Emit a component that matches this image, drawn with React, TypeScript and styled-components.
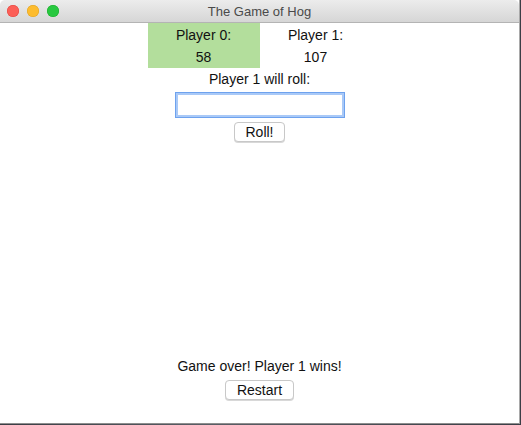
import * as React from "react";
import styled, { createGlobalStyle } from "styled-components";

const Global = createGlobalStyle`
  html, body {
    margin: 0;
    padding: 0;
    background: #6d6f73;
    font-family: "Liberation Sans", Arial, sans-serif;
  }
`;

const Desk = styled.div`
  width: 521px;
  height: 425px;
  background: linear-gradient(90deg, #3a3d44, #5a5e66 40%, #3b3e46);
  overflow: hidden;
`;

const Window = styled.div`
  width: 520px;
  height: 424px;
  background: #fff;
  border-right: 1px solid #a9a9a9;
  border-bottom: 1px solid #8e8e8e;
  display: flex;
  flex-direction: column;
  box-sizing: border-box;
`;

const TitleBar = styled.div`
  height: 23px;
  flex: 0 0 23px;
  background: linear-gradient(#ececec, #d6d6d6);
  border-bottom: 1px solid #b4b4b4;
  border-radius: 5px 5px 0 0;
  display: flex;
  align-items: center;
  position: relative;
  box-sizing: border-box;
`;

const Lights = styled.div`
  display: flex;
  gap: 8px;
  padding-left: 7px;
`;

const Light = styled.span<{ $c: string; $b: string }>`
  width: 12px;
  height: 12px;
  border-radius: 50%;
  background: ${(p) => p.$c};
  box-shadow: inset 0 0 0 0.5px ${(p) => p.$b};
`;

const Title = styled.div`
  position: absolute;
  left: 0;
  right: 0;
  text-align: center;
  font-size: 13px;
  color: #4a4a4a;
  pointer-events: none;
`;

const Body = styled.div`
  display: flex;
  flex-direction: column;
  align-items: center;
  font-size: 14px;
  color: #111;
`;

const Scores = styled.div`
  display: grid;
  grid-template-columns: 112px 112px;
`;

const Cell = styled.div<{ $active?: boolean }>`
  background: ${(p) => (p.$active ? "#b3de9c" : "transparent")};
  display: flex;
  flex-direction: column;
  align-items: center;
  padding-top: 1px;
  height: 45px;
  box-sizing: border-box;
  line-height: 22px;
`;

const Label = styled.div<{ $mt: number }>`
  margin-top: ${(p) => p.$mt}px;
  line-height: 17px;
`;

const Input = styled.input`
  margin-top: 4px;
  width: 170px;
  height: 26px;
  box-sizing: border-box;
  border: 1px solid #6ea2ee;
  outline: 2px solid #a9c9f7;
  outline-offset: -3px;
  box-shadow: inset 0 0 0 1px #a9c9f7;
  background: #fff;
`;

const Button = styled.button<{ $w: number; $mt: number }>`
  margin-top: ${(p) => p.$mt}px;
  width: ${(p) => p.$w}px;
  height: 20px;
  background: #fff;
  border: 1px solid #c8c8c8;
  border-radius: 4px;
  box-shadow: 0 1px 0 #d8d8d8;
  font-family: "Liberation Sans", Arial, sans-serif;
  font-size: 14px;
  color: #111;
  padding: 0;
  line-height: 18px;
`;

const Spacer = styled.div`
  height: 216px;
`;

export default function App() {
  return (
    <Desk>
      <Global />
      <Window>
        <TitleBar>
          <Lights>
            <Light $c="#fc5f57" $b="#e0443e" />
            <Light $c="#fdbc2e" $b="#dea123" />
            <Light $c="#28c840" $b="#1aab29" />
          </Lights>
          <Title>The Game of Hog</Title>
        </TitleBar>
        <Body>
          <Scores>
            <Cell $active>
              <span>Player 0:</span>
              <span>58</span>
            </Cell>
            <Cell>
              <span>Player 1:</span>
              <span>107</span>
            </Cell>
          </Scores>
          <Label $mt={3}>Player 1 will roll:</Label>
          <Input />
          <Button $w={51} $mt={4}>Roll!</Button>
          <Spacer />
          <Label $mt={0}>Game over! Player 1 wins!</Label>
          <Button $w={69} $mt={5}>Restart</Button>
        </Body>
      </Window>
    </Desk>
  );
}
